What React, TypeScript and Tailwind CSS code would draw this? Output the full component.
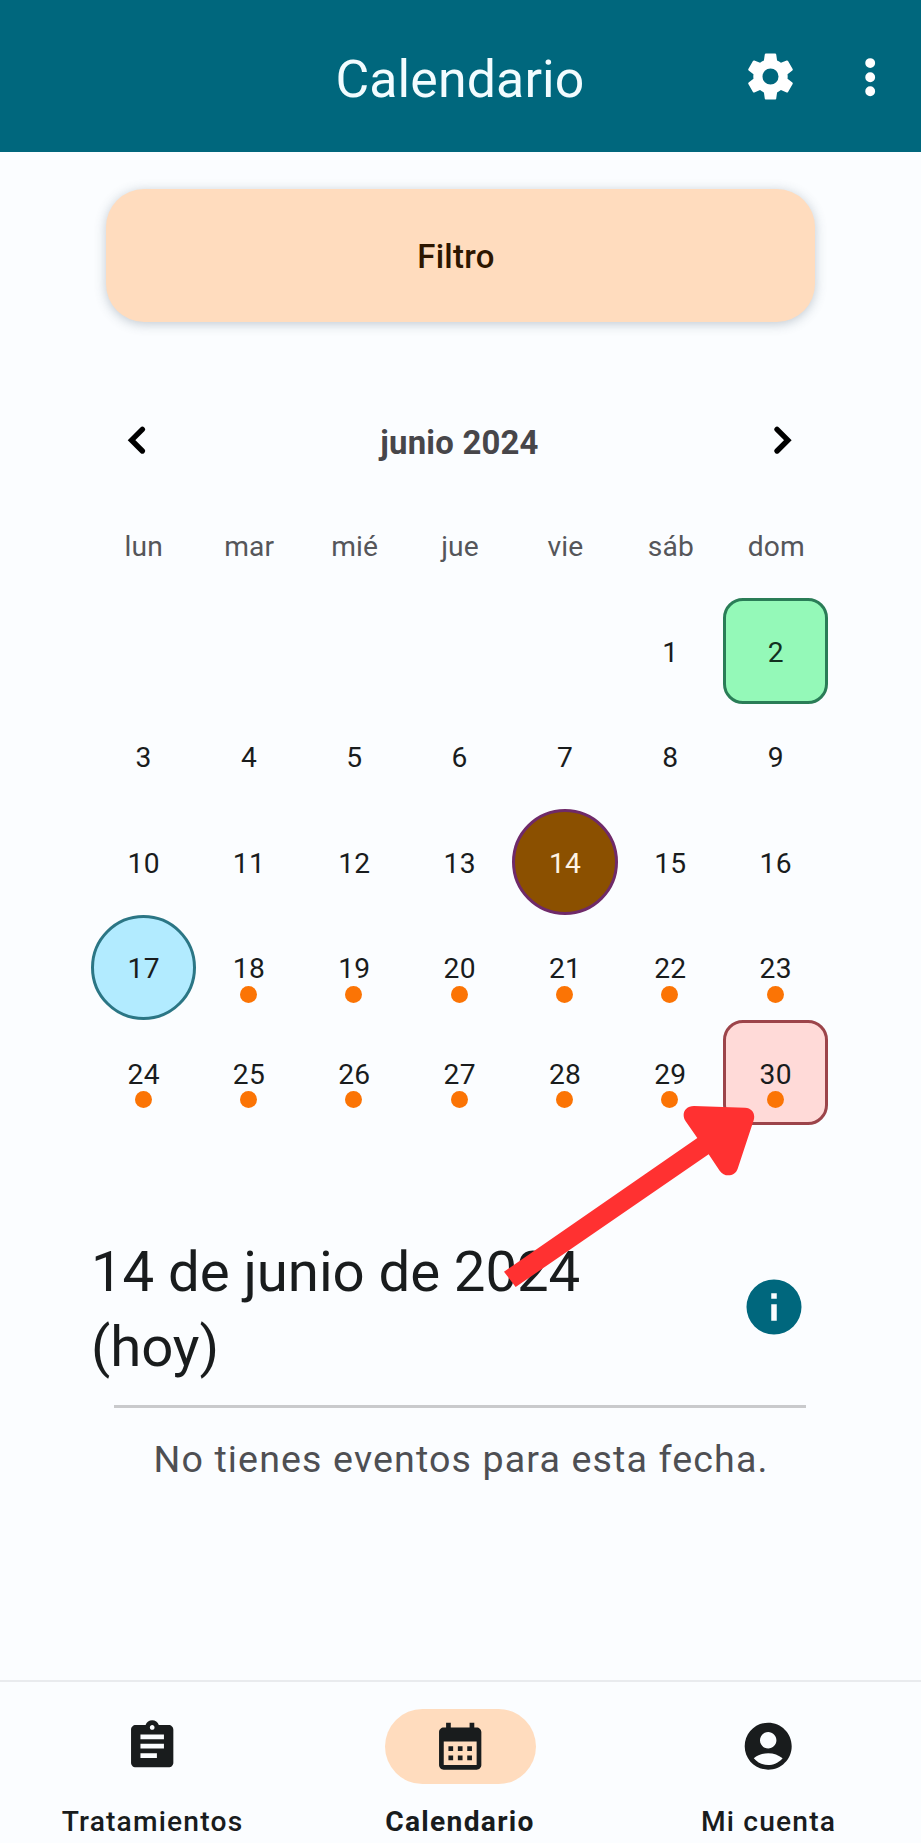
import React from "react";

type IconProps = { d: string; className: string };

function Icon({ d, className }: IconProps) {
  return (
    <svg viewBox="0 0 24 24" fill="currentColor" fillRule="evenodd" className={className}>
      <path d={d} />
    </svg>
  );
}

function Chevron({ d }: { d: string }) {
  return (
    <svg viewBox="0 0 24 24" fill="none" stroke="currentColor" strokeWidth="2.3" strokeLinecap="round" className="size-[56.4px]">
      <path d={d} />
    </svg>
  );
}

const COG =
  "M12,15.5A3.5,3.5 0 0,1 8.5,12A3.5,3.5 0 0,1 12,8.5A3.5,3.5 0 0,1 15.5,12A3.5,3.5 0 0,1 12,15.5M19.43,12.97C19.47,12.65 19.5,12.33 19.5,12C19.5,11.67 19.47,11.34 19.43,11L21.54,9.37C21.73,9.22 21.78,8.95 21.66,8.73L19.66,5.27C19.54,5.05 19.27,4.96 19.05,5.05L16.56,6.05C16.04,5.66 15.5,5.32 14.87,5.07L14.5,2.42C14.46,2.18 14.25,2 14,2H10C9.75,2 9.54,2.18 9.5,2.42L9.13,5.07C8.5,5.32 7.96,5.66 7.44,6.05L4.95,5.05C4.73,4.96 4.46,5.05 4.34,5.27L2.34,8.73C2.21,8.95 2.27,9.22 2.46,9.37L4.57,11C4.53,11.34 4.5,11.67 4.5,12C4.5,12.33 4.53,12.65 4.57,12.97L2.46,14.63C2.27,14.78 2.21,15.05 2.34,15.27L4.34,18.73C4.46,18.95 4.73,19.03 4.95,18.95L7.44,17.94C7.96,18.34 8.5,18.68 9.13,18.93L9.5,21.58C9.54,21.82 9.75,22 10,22H14C14.25,22 14.46,21.82 14.5,21.58L14.87,18.93C15.5,18.67 16.04,18.34 16.56,17.94L19.05,18.95C19.27,19.03 19.54,18.95 19.66,18.73L21.66,15.27C21.78,15.05 21.73,14.78 21.54,14.63L19.43,12.97Z";
const MORE =
  "M12 8.1a2.1 2.1 0 1 0 0-4.2 2.1 2.1 0 0 0 0 4.2ZM12 14.1a2.1 2.1 0 1 0 0-4.2 2.1 2.1 0 0 0 0 4.2ZM12 20.1a2.1 2.1 0 1 0 0-4.2 2.1 2.1 0 0 0 0 4.2Z";
const CHEVRON_LEFT = "M14.2 7.4L9.6 12L14.2 16.6";
const CHEVRON_RIGHT = "M9.8 7.4L14.4 12L9.8 16.6";
const INFO = "M13,9H11V7H13M13,17H11V11H13M12,2A10,10 0 0,0 2,12A10,10 0 0,0 12,22A10,10 0 0,0 22,12A10,10 0 0,0 12,2Z";
const ASSIGNMENT =
  "M19 3h-4.18C14.4 1.84 13.3 1 12 1c-1.3 0-2.4.84-2.82 2H5c-1.1 0-2 .9-2 2v14c0 1.1.9 2 2 2h14c1.1 0 2-.9 2-2V5c0-1.1-.9-2-2-2zM12 3c.55 0 1 .45 1 1s-.45 1-1 1-1-.45-1-1 .45-1 1-1zM14 17H7v-2h7v2zM17 13H7v-2h10v2zM17 9H7V7h10v2z";
const CALENDAR =
  "M19 4h-1V2h-2v2H8V2H6v2H5c-1.11 0-2 .9-2 2v14c0 1.1.89 2 2 2h14c1.1 0 2-.9 2-2V6c0-1.1-.9-2-2-2zM19 20H5V10h14v10zM9 14H7v-2h2v2zM13 14h-2v-2h2v2zM17 14h-2v-2h2v2zM9 18H7v-2h2v2zM13 18h-2v-2h2v2zM17 18h-2v-2h2v2z";
const ACCOUNT =
  "M12 2C6.48 2 2 6.48 2 12s4.48 10 10 10 10-4.48 10-10S17.52 2 12 2zM12 6c1.93 0 3.5 1.57 3.5 3.5S13.93 13 12 13s-3.5-1.57-3.5-3.5S10.07 6 12 6zM12 20c-2.03 0-4.43-.82-6.14-2.88C7.55 15.8 9.68 15 12 15s4.45.8 6.14 2.12C16.43 19.18 14.03 20 12 20z";

const WEEKDAYS = ["lun", "mar", "mié", "jue", "vie", "sáb", "dom"];
const LEADING_BLANKS = 5;
const DAYS = Array.from({ length: 30 }, (_, i) => i + 1);

const MARKS: Record<number, string> = {
  2: "rounded-[20px] border-3 border-[#2a7d57] bg-[#94f9b8] text-[#12301f]",
  14: "rounded-full border-3 border-[#6f2a69] bg-[#8b5000] text-[#fff3e4]",
  17: "rounded-full border-3 border-[#2b7685] bg-[#b2ebff] text-[#191c1d]",
  30: "rounded-[20px] border-3 border-[#9c444a] bg-[#ffdad8] text-[#191c1d]",
};

function Day({ day }: { day: number }) {
  return (
    <div
      className={`relative flex items-center justify-center pt-[4px] text-[28.2px] tracking-[0.3px] ${
        MARKS[day] ?? "text-[#191c1d]"
      }`}
    >
      {day}
      {day >= 18 && (
        <span
          className={`absolute left-1/2 -ml-[9px] size-[17px] rounded-full bg-[#fb7405] ${
            day === 30 ? "top-[68.5px]" : "top-[71.5px]"
          }`}
        />
      )}
    </div>
  );
}

function NavItem({ icon, label, active = false }: { icon: string; label: string; active?: boolean }) {
  return (
    <div className="flex w-[308px] shrink-0 flex-col items-center">
      <div
        className={`flex h-[75px] w-[151px] items-center justify-center rounded-full ${active ? "bg-[#ffdcbe]" : ""}`}
      >
        <Icon d={icon} className="size-[56.4px]" />
      </div>
      <span
        className={`mt-[19px] text-[28.2px] leading-[38px] ${
          active ? "pr-px font-bold tracking-[1.3px]" : "font-medium tracking-[1.18px]"
        }`}
      >
        {label}
      </span>
    </div>
  );
}

export default function App() {
  return (
    <div className="relative flex h-[1843px] w-[921px] flex-col overflow-hidden bg-[#fbfdff] font-[Roboto,sans-serif] text-[#191c1d]">
      <header className="grid h-[152px] shrink-0 grid-cols-[1fr_auto_1fr] items-center bg-[#00677d] text-[#f2fcff]">
        <span />
        <h1 className="pr-px pt-[7px] text-[51.8px] leading-[66px] tracking-[0.15px]">Calendario</h1>
        <div className="flex items-center justify-end gap-[44px] pr-[23px] pt-[2px] text-white">
          <Icon d={COG} className="size-[55px]" />
          <Icon d={MORE} className="size-[56.4px]" />
        </div>
      </header>

      <main className="flex flex-1 flex-col">
        <button className="ml-[106px] mt-[37px] h-[133px] w-[709px] rounded-[38px] bg-[#ffdcbe] pr-[9px] pt-[3px] text-[32.9px] font-medium tracking-[0.3px] text-[#2d1600] shadow-[0_2px_12px_rgba(60,80,100,0.3)]">
          Filtro
        </button>

        <div className="ml-[109px] mt-[90px] flex h-[56px] w-[701px] items-center justify-between text-black">
          <Chevron d={CHEVRON_LEFT} />
          <span className="pt-[4px] text-[32.9px] font-bold leading-[47px] tracking-[0.2px] text-[#47464a]">
            junio 2024
          </span>
          <Chevron d={CHEVRON_RIGHT} />
        </div>

        <div className="ml-[91px] mt-[60px] grid h-[38px] w-[738px] grid-cols-7 text-center text-[28.2px] leading-[38px] tracking-[0.1px] text-[#55565a]">
          {WEEKDAYS.map((w) => (
            <span key={w}>{w}</span>
          ))}
        </div>

        <div className="ml-[91px] mt-[32.4px] grid h-[527px] w-[737.4px] grid-cols-7 grid-rows-5">
          {Array.from({ length: LEADING_BLANKS }, (_, i) => (
            <span key={`blank-${i}`} />
          ))}
          {DAYS.map((d) => (
            <Day key={d} day={d} />
          ))}
        </div>

        <div className="ml-[91px] mt-[109.6px] flex w-[716px] items-center justify-between">
          <h2 className="w-[560px] text-[56.4px] leading-[75px] tracking-[-0.1px]">14 de junio de 2024 (hoy)</h2>
          <Icon d={INFO} className="-mt-[6px] size-[66px] text-[#00677d]" />
        </div>
        <div className="ml-[114px] mt-[20px] h-[3px] w-[692px] bg-[#c9cacc]" />
        <p className="mt-[23px] pl-px text-center text-[37.6px] leading-[56px] tracking-[1.13px] text-[#4e4f53]">
          No tienes eventos para esta fecha.
        </p>
      </main>

      <nav className="flex h-[163px] shrink-0 justify-center border-t-2 border-[#e9ebee] pt-[27px]">
        <NavItem icon={ASSIGNMENT} label="Tratamientos" />
        <NavItem icon={CALENDAR} label="Calendario" active />
        <NavItem icon={ACCOUNT} label="Mi cuenta" />
      </nav>

      <svg viewBox="0 0 1200 1560" className="absolute left-[480px] top-[780px] h-[520px] w-[400px]">
        <path
          fill="#ff3131"
          d="M72 1475L652 1074L617 1024C603 1003 614 978 642 978L795 983C816 984 827 1001 821 1021L773 1166C765 1190 733 1193 719 1172L686 1123L107 1521Z"
        />
      </svg>
    </div>
  );
}
